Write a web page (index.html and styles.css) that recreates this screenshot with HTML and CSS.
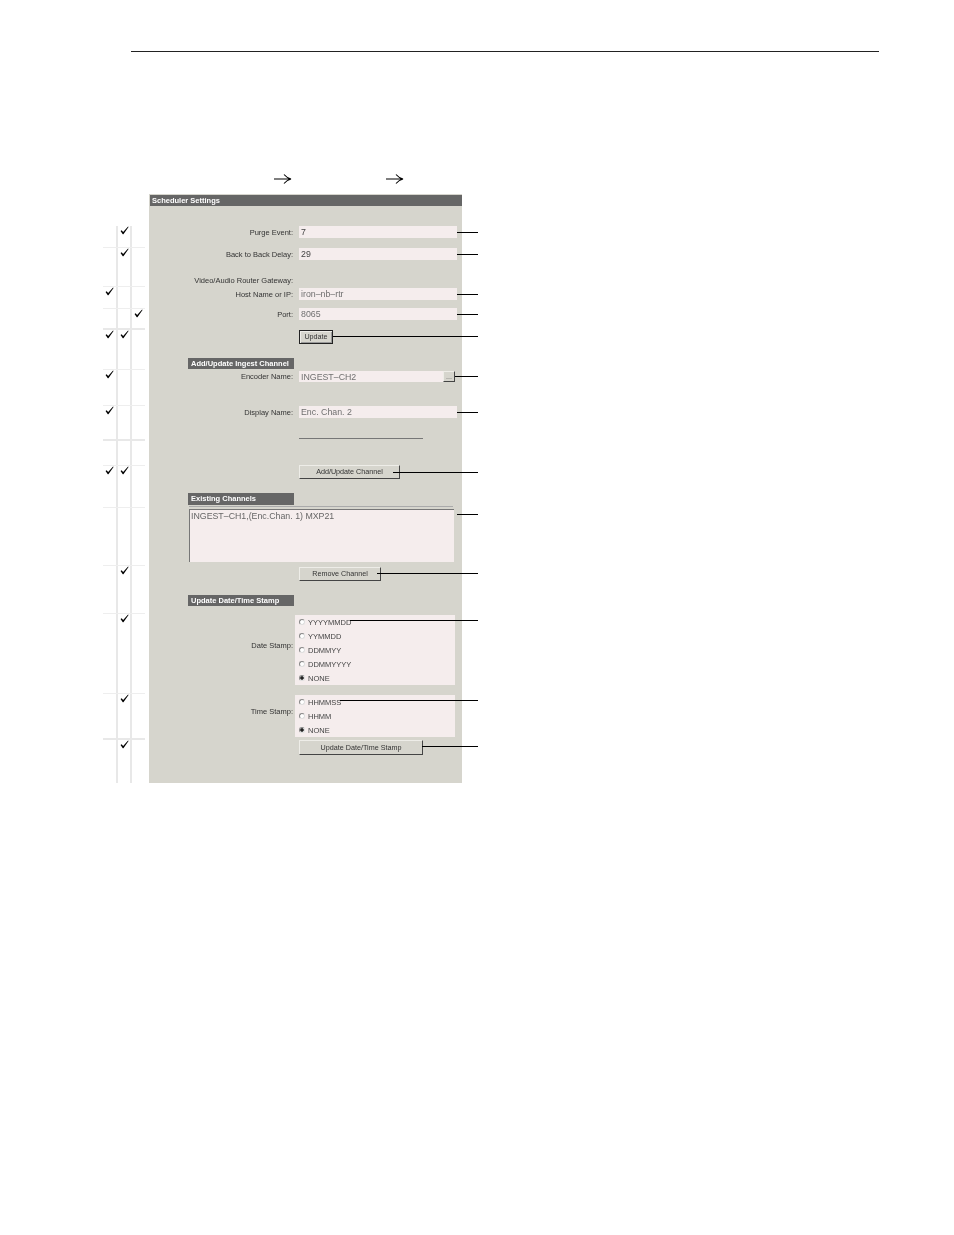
FILE: index.html
```html
<!DOCTYPE html>
<html lang="en">
<head>
    <meta charset="UTF-8">
    <title>Scheduler Settings</title>
    <link rel="stylesheet" href="styles.css">
</head>
<body>
    <svg class="defs" width="0" height="0">
        <symbol id="tick" viewBox="0 0 10 10">
            <polygon points="0.6,5.6 1.8,4.8 3.5,6.6 9,0.6 9.5,1 3.8,9.2 3.1,9.2"/>
        </symbol>
        <symbol id="arrow" viewBox="0 0 18 12">
            <path d="M0 6H17M10 1.5Q13 5 17 6Q13 7 10 10.5" fill="none" stroke="#000" stroke-width="1.1"/>
        </symbol>
    </svg>

    <div class="page-rule"></div>

    <div class="arrows">
        <svg class="arrow"><use href="#arrow"/></svg>
        <svg class="arrow"><use href="#arrow"/></svg>
    </div>

    <div class="figure">
        <div class="checks">
            <div class="check-row"><span></span><span><svg class="tick"><use href="#tick"/></svg></span><span></span></div>
            <div class="check-row"><span></span><span><svg class="tick"><use href="#tick"/></svg></span><span></span></div>
            <div class="check-row"><span><svg class="tick"><use href="#tick"/></svg></span><span></span><span></span></div>
            <div class="check-row"><span></span><span></span><span><svg class="tick"><use href="#tick"/></svg></span></div>
            <div class="check-row thick"><span><svg class="tick"><use href="#tick"/></svg></span><span><svg class="tick"><use href="#tick"/></svg></span><span></span></div>
            <div class="check-row"><span><svg class="tick"><use href="#tick"/></svg></span><span></span><span></span></div>
            <div class="check-row"><span><svg class="tick"><use href="#tick"/></svg></span><span></span><span></span></div>
            <div class="check-row thick"><span></span><span></span><span></span></div>
            <div class="check-row"><span><svg class="tick"><use href="#tick"/></svg></span><span><svg class="tick"><use href="#tick"/></svg></span><span></span></div>
            <div class="check-row"><span></span><span></span><span></span></div>
            <div class="check-row"><span></span><span><svg class="tick"><use href="#tick"/></svg></span><span></span></div>
            <div class="check-row"><span></span><span><svg class="tick"><use href="#tick"/></svg></span><span></span></div>
            <div class="check-row"><span></span><span><svg class="tick"><use href="#tick"/></svg></span><span></span></div>
            <div class="check-row thick"><span></span><span><svg class="tick"><use href="#tick"/></svg></span><span></span></div>
        </div>

        <div class="panel">
            <div class="panel-title">Scheduler Settings</div>

            <div class="row row-purge">
                <label class="label">Purge Event:</label>
                <input class="field" type="text" value="7" readonly>
                <i class="leader leader-field"></i>
            </div>
            <div class="row row-delay">
                <label class="label">Back to Back Delay:</label>
                <input class="field" type="text" value="29" readonly>
                <i class="leader leader-field"></i>
            </div>
            <div class="row row-gateway">
                <label class="label">Video/Audio Router Gateway:</label>
            </div>
            <div class="row row-host">
                <label class="label">Host Name or IP:</label>
                <input class="field field-dim" type="text" value="iron–nb–rtr" readonly>
                <i class="leader leader-field"></i>
            </div>
            <div class="row row-port">
                <label class="label">Port:</label>
                <input class="field field-dim" type="text" value="8065" readonly>
                <i class="leader leader-field"></i>
            </div>
            <div class="row row-update">
                <button class="btn btn-default btn-update">Update</button>
                <i class="leader leader-update"></i>
            </div>

            <div class="section-title section-ingest">Add/Update Ingest Channel</div>
            <div class="row row-encoder">
                <label class="label label-short">Encoder Name:</label>
                <input class="field field-dim field-encoder" type="text" value="INGEST–CH2" readonly>
                <button class="btn btn-browse">...</button>
                <i class="leader leader-encoder"></i>
            </div>
            <div class="row row-display">
                <label class="label">Display Name:</label>
                <input class="field field-dim" type="text" value="Enc. Chan. 2" readonly>
                <i class="leader leader-field"></i>
            </div>
            <div class="row row-rule">
                <div class="thin-rule"></div>
            </div>
            <div class="row row-add">
                <button class="btn btn-add">Add/Update Channel</button>
                <i class="leader leader-add"></i>
            </div>

            <div class="section-title section-existing">Existing Channels</div>
            <div class="list-rule"></div>
            <div class="row row-list">
                <textarea class="channel-list" readonly>INGEST–CH1,(Enc.Chan. 1) MXP21</textarea>
                <i class="leader leader-list"></i>
            </div>
            <div class="row row-remove">
                <button class="btn btn-remove">Remove Channel</button>
                <i class="leader leader-remove"></i>
            </div>

            <div class="section-title section-stamp">Update Date/Time Stamp</div>
            <div class="row row-date">
                <label class="label label-stamp">Date Stamp:</label>
                <div class="radio-box">
                    <label class="radio"><input type="radio" name="date">YYYYMMDD</label>
                    <label class="radio"><input type="radio" name="date">YYMMDD</label>
                    <label class="radio"><input type="radio" name="date">DDMMYY</label>
                    <label class="radio"><input type="radio" name="date">DDMMYYYY</label>
                    <label class="radio"><input type="radio" name="date" checked>NONE</label>
                </div>
                <i class="leader leader-date"></i>
            </div>
            <div class="row row-time">
                <label class="label label-stamp">Time Stamp:</label>
                <div class="radio-box">
                    <label class="radio"><input type="radio" name="time">HHMMSS</label>
                    <label class="radio"><input type="radio" name="time">HHMM</label>
                    <label class="radio"><input type="radio" name="time" checked>NONE</label>
                </div>
                <i class="leader leader-time"></i>
            </div>
            <div class="row row-stamp">
                <button class="btn btn-stamp">Update Date/Time Stamp</button>
                <i class="leader leader-stamp"></i>
            </div>
        </div>
    </div>
</body>
</html>
```

FILE: styles.css
```css
* {
    box-sizing: border-box;
}

body {
    margin: 0;
    width: 954px;
    height: 1235px;
    background-color: #fff;
    font-family: "Liberation Sans", Arial, sans-serif;
    overflow: hidden;
}

.defs {
    position: absolute;
}

.page-rule {
    width: 748px;
    height: 1px;
    margin: 51px 0 0 131px;
    background-color: #222;
}

.arrows {
    display: flex;
    gap: 94px;
    margin: 121px 0 0 274px;
    height: 13px;
}

.arrow {
    width: 18px;
    height: 12px;
}

.figure {
    display: flex;
    margin: 8px 0 0 103px;
}

/* check mark table on the left */
.checks {
    display: grid;
    grid-template-rows: 21px 39px 22px 20px 41px 36px 34px 26px 42px 58px 48px 80px 45px 45px;
    width: 42px;
    height: 557px;
    margin: 32px 4px 0 0;
}

.check-row {
    display: grid;
    grid-template-columns: 15px 14px 13px;
    border-top: 1px solid #eee;
}

.check-row:first-child {
    border-top: none;
}

.check-row.thick {
    border-top: 2px solid #e8e8e8;
}

.check-row span {
    display: flex;
    justify-content: center;
}

.check-row span:not(:last-child) {
    border-right: 2px solid #e8e8e8;
}

.tick {
    width: 9px;
    height: 9px;
}

/* settings panel */
.panel {
    width: 313px;
    height: 589px;
    padding-top: 1px;
    background-color: #d6d5cd;
    color: #333;
    font-size: 7.5px;
}

/* the screen grab in the manual is soft, so the widgets are too */
.panel-title,
.section-title,
.label,
.field,
.btn,
.channel-list,
.radio-box {
    filter: blur(0.3px);
}

.panel-title {
    height: 11px;
    margin-left: 1px;
    padding-left: 2px;
    background-color: #666;
    color: #fff;
    font-weight: bold;
    line-height: 11px;
}

.row {
    display: flex;
    position: relative;
    padding-left: 150px;
}

.label {
    position: absolute;
    right: 169px;
    white-space: nowrap;
    line-height: 13px;
}

.label-short {
    line-height: 12px;
}

.field {
    width: 158px;
    height: 12px;
    padding: 0 2px;
    border: none;
    outline: none;
    background-color: #f5eded;
    color: #444;
    font-family: inherit;
    font-size: 8.8px;
}

.field-dim {
    color: #707070;
}

.field-encoder {
    width: 144px;
    height: 11px;
}

.btn {
    padding: 0;
    background-color: #d6d5cd;
    border: 1px solid;
    border-color: #eeede8 #444 #444 #eeede8;
    color: #333;
    font-family: inherit;
    font-size: 7.2px;
    line-height: 1;
    cursor: pointer;
}

.btn-default {
    border-color: #222;
    box-shadow: inset 1px 1px 0 #eeede8, inset -1px -1px 0 #999;
}

.btn-update {
    width: 34px;
    height: 14px;
}

.btn-browse {
    width: 12px;
    height: 11px;
    color: #666;
}

.btn-add {
    width: 101px;
    height: 14px;
}

.btn-remove {
    width: 82px;
    height: 14px;
}

.btn-stamp {
    width: 124px;
    height: 15px;
}

.section-title {
    width: 106px;
    height: 11px;
    margin-left: 39px;
    padding-left: 3px;
    background-color: #666;
    color: #fff;
    font-weight: bold;
    line-height: 11px;
    white-space: nowrap;
}

.section-existing {
    height: 12px;
    line-height: 12px;
}

.thin-rule {
    width: 124px;
    height: 1px;
    background-color: #777;
}

.list-rule {
    width: 264px;
    height: 1px;
    margin: 1px 0 0 40px;
    background-color: #aaa;
}

.channel-list {
    width: 265px;
    height: 53px;
    padding: 1px;
    border: solid #777;
    border-width: 1px 0 0 1px;
    outline: none;
    resize: none;
    overflow: hidden;
    background-color: #f5eded;
    color: #666;
    font-family: inherit;
    font-size: 8.8px;
}

.radio-box {
    width: 160px;
    margin-left: -4px;
    padding-left: 4px;
    background-color: #f5eded;
}

.radio {
    display: flex;
    align-items: center;
    height: 14px;
    color: #444;
    font-size: 7.5px;
}

.radio input {
    appearance: none;
    width: 6px;
    height: 6px;
    margin: 0 3px 0 0;
    border: 1px solid;
    border-color: #888 #ddd #ddd #888;
    border-radius: 50%;
    background-color: #fff;
}

.radio input:checked {
    background: radial-gradient(circle, #222 0 1.5px, #fff 2px);
}

/* callout lines running off the panel */
.leader {
    position: absolute;
    right: -16px;
    top: 6px;
    height: 1px;
    background-color: #000;
}

.leader-field { width: 21px; }
.leader-encoder { width: 23px; top: 5px; }
.leader-update { width: 145px; }
.leader-add { width: 85px; top: 7px; }
.leader-list { width: 21px; top: 5px; }
.leader-remove { width: 101px; }
.leader-date { width: 128px; top: 5px; }
.leader-time { width: 138px; top: 5px; }
.leader-stamp { width: 56px; }

/* vertical rhythm of the panel */
.row-purge { margin-top: 20px; }
.row-delay { margin-top: 10px; }
.row-gateway { margin-top: 14px; height: 12px; }
.row-host { margin-top: 2px; }
.row-port { margin-top: 8px; }
.row-update { margin-top: 10px; }
.section-ingest { margin-top: 14px; }
.row-encoder { margin-top: 2px; height: 11px; }
.row-display { margin-top: 24px; }
.row-rule { margin-top: 20px; }
.row-add { margin-top: 26px; }
.section-existing { margin-top: 14px; }
.row-list { margin-top: 2px; padding-left: 40px; }
.row-remove { margin-top: 5px; }
.section-stamp { margin-top: 14px; }
.row-date { margin-top: 9px; }
.row-time { margin-top: 10px; }
.row-stamp { margin-top: 3px; }

.label-stamp {
    top: 50%;
    margin-top: -11px;
}
```
